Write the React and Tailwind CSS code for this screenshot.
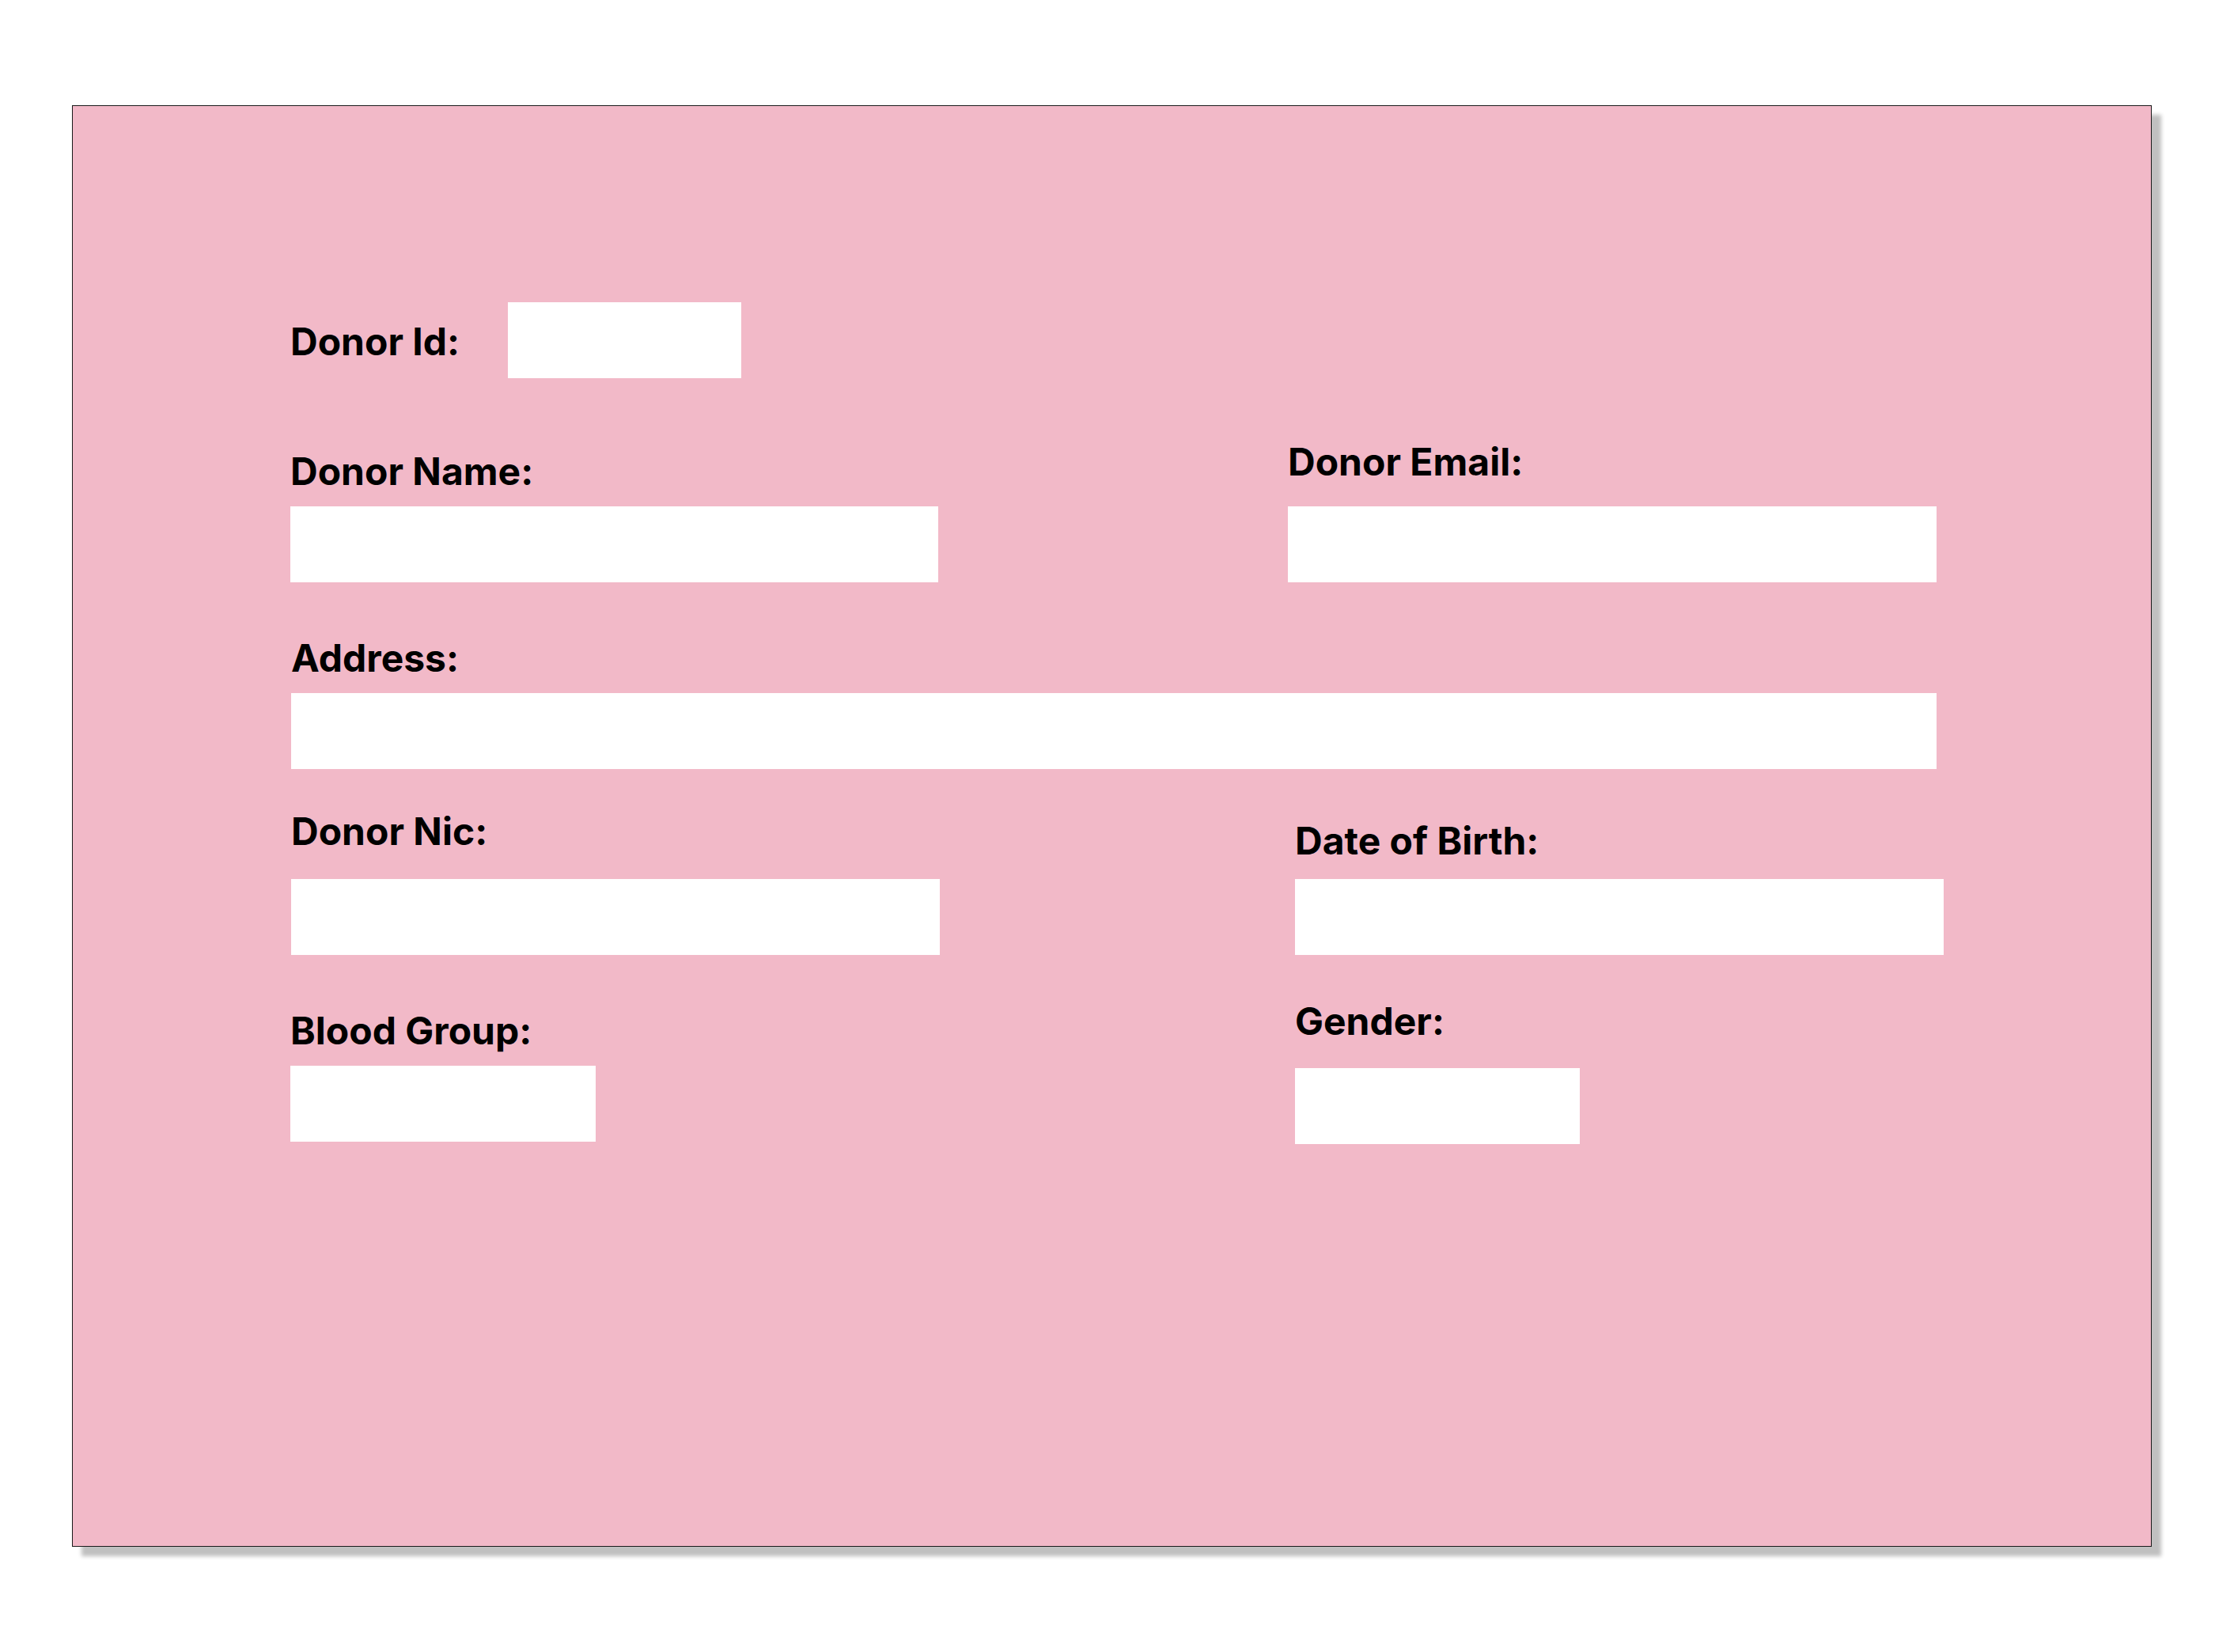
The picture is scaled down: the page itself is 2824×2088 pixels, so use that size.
import React from 'react';

const Label = ({ children, className = '' }) => (
    <div className={`h-[48px] text-[48px] leading-none font-bold text-black whitespace-nowrap ${className}`}>
        {children}
    </div>
);

const Field = ({ className = '' }) => <div className={`h-[96px] bg-white ${className}`} />;

const App = () => {
    return (
        <div className="min-h-[2088px] bg-white pt-[133px] pl-[91px]" style={{ fontFamily: 'Inter, "Noto Sans", sans-serif' }}>
            <div className="w-[2629px] h-[1822px] bg-[#f2b9c8] border border-[#1a1a1a] shadow-[12px_12px_5px_#c0c0c0] pt-[248px] pl-[275px]">
                {/* donor id */}
                <div className="flex items-center">
                    <div className="w-[275px] pt-[4px]">
                        <Label>Donor Id:</Label>
                    </div>
                    <Field className="w-[295px]" />
                </div>

                {/* name / email */}
                <div className="grid grid-cols-[1261px_1fr] items-end mt-[82px]">
                    <div className="flex flex-col">
                        <Label className="mb-[20px]">Donor Name:</Label>
                        <Field className="w-[819px]" />
                    </div>
                    <div className="flex flex-col">
                        <Label className="mb-[32px]">Donor Email:</Label>
                        <Field className="w-[820px]" />
                    </div>
                </div>

                {/* address */}
                <div className="flex flex-col mt-[72px] pl-[1px]">
                    <Label className="mb-[20px]">Address:</Label>
                    <Field className="w-[2080px]" />
                </div>

                {/* nic / dob */}
                <div className="grid grid-cols-[1261px_1fr] items-end mt-[55px]">
                    <div className="flex flex-col pl-[1px]">
                        <Label className="mb-[36px]">Donor Nic:</Label>
                        <Field className="w-[820px]" />
                    </div>
                    <div className="flex flex-col pl-[9px]">
                        <Label className="mb-[24px]">Date of Birth:</Label>
                        <Field className="w-[820px]" />
                    </div>
                </div>

                {/* blood group / gender */}
                <div className="grid grid-cols-[1261px_1fr] items-start mt-[60px]">
                    <div className="flex flex-col pt-[12px]">
                        <Label className="mb-[20px]">Blood Group:</Label>
                        <Field className="w-[386px]" />
                    </div>
                    <div className="flex flex-col pl-[9px]">
                        <Label className="mb-[35px]">Gender:</Label>
                        <Field className="w-[360px]" />
                    </div>
                </div>
            </div>
        </div>
    );
};

export default App;
